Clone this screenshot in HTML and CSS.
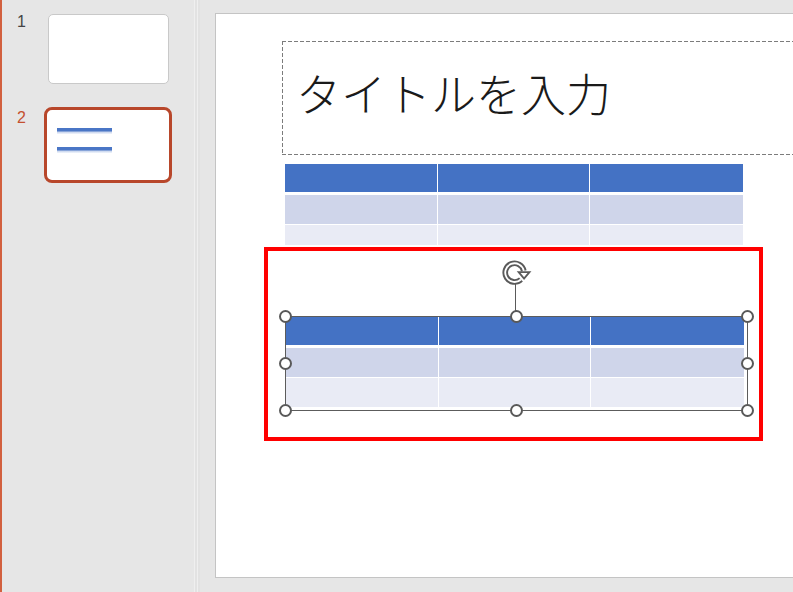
FILE: index.html
```html
<!DOCTYPE html>
<html lang="ja">
<head>
<meta charset="utf-8">
<link rel="stylesheet" href="styles.css">
</head>
<body>
<div class="app">
  <div class="edge"></div>
  <aside class="sidebar">
    <div class="thumb-row">
      <span class="num">1</span>
      <div class="thumb thumb-plain"></div>
    </div>
    <div class="thumb-row active">
      <span class="num">2</span>
      <div class="thumb thumb-active">
        <div class="mini-line"></div>
        <div class="mini-line"></div>
      </div>
    </div>
  </aside>
  <div class="splitter"><span></span><span></span></div>
  <main class="stage">
    <div class="slide">
      <div class="title-box"><span class="title-text">タイトルを入力</span></div>
      <div class="table table-one">
        <div class="cell head"></div><div class="cell head"></div><div class="cell head"></div>
        <div class="cell band1"></div><div class="cell band1"></div><div class="cell band1"></div>
        <div class="cell band2"></div><div class="cell band2"></div><div class="cell band2"></div>
      </div>
      <div class="table table-two">
        <div class="cell head"></div><div class="cell head"></div><div class="cell head"></div>
        <div class="cell band1"></div><div class="cell band1"></div><div class="cell band1"></div>
        <div class="cell band2"></div><div class="cell band2"></div><div class="cell band2"></div>
      </div>
      <div class="selection">
        <span class="handle h-tl"></span>
        <span class="handle h-tc"></span>
        <span class="handle h-tr"></span>
        <span class="handle h-ml"></span>
        <span class="handle h-mr"></span>
        <span class="handle h-bl"></span>
        <span class="handle h-bc"></span>
        <span class="handle h-br"></span>
        <span class="rot-stem"></span>
        <svg class="rot-icon" width="34" height="34" viewBox="0 0 24 24">
          <path d="M16.2 16.6 A6.6 6.6 0 1 1 18.2 10.5" fill="none" stroke="#5a5a5a" stroke-width="4" stroke-linecap="butt"/>
          <path d="M16.2 16.6 A6.6 6.6 0 1 1 18.2 10.5" fill="none" stroke="#ffffff" stroke-width="1.3"/>
          <path d="M14.6 11.4 L22.2 11.4 L18.4 15.9 Z" fill="#ffffff" stroke="#5a5a5a" stroke-width="1.3" stroke-linejoin="miter"/>
        </svg>
      </div>
      <div class="annotation"></div>
    </div>
  </main>
</div>
</body>
</html>
```
FILE: styles.css
```css
* { box-sizing: border-box; }
html, body {
  margin: 0;
  padding: 0;
  width: 793px;
  height: 592px;
  overflow: hidden;
  background: #e6e6e6;
  font-family: "Liberation Sans", Arial, sans-serif;
}
.app {
  display: flex;
  height: 592px;
}
.edge {
  width: 2px;
  flex: none;
  background: #d2603f;
}
.sidebar {
  width: 192px;
  flex: none;
  background: #e6e6e6;
  padding-top: 14px;
  display: flex;
  flex-direction: column;
  gap: 23px;
}
.thumb-row {
  display: flex;
  align-items: flex-start;
}
.num {
  width: 42px;
  padding-left: 15px;
  font-size: 16px;
  line-height: 16px;
  color: #444444;
}
.thumb-plain {
  margin-left: 4px;
  width: 121px;
  height: 70px;
  background: #ffffff;
  border: 1px solid #c9c9c9;
  border-radius: 5px;
}
.thumb-row.active .num {
  color: #c4502f;
  margin-top: 3px;
}
.thumb-active {
  width: 128px;
  height: 76px;
  background: #ffffff;
  border: 3px solid #b8472b;
  border-radius: 8px;
  padding: 18px 0 0 10px;
  display: flex;
  flex-direction: column;
  gap: 13px;
}
.mini-line {
  width: 55px;
  height: 6px;
  background: linear-gradient(#4a76c6 0, #4a76c6 3px, #c6d3ec 4px, #f3f6fc 6px);
}
.splitter {
  width: 6px;
  flex: none;
  display: flex;
  gap: 2px;
  background: #e2e2e2;
}
.splitter span {
  width: 1px;
  background: #efefef;
}
.stage {
  flex: 1;
  padding: 13px 0 0 15px;
  background: #e6e6e6;
}
.slide {
  position: relative;
  width: 620px;
  height: 565px;
  background: #ffffff;
  border: 1px solid #c4c4c4;
  border-right: none;
  padding: 27px 0 0 66px;
}
.title-box {
  width: 560px;
  height: 114px;
  padding: 29px 0 0 14px;
  background-image:
    repeating-linear-gradient(90deg, #7c7c7c 0 4px, transparent 4px 6px),
    repeating-linear-gradient(90deg, #7c7c7c 0 4px, transparent 4px 6px),
    repeating-linear-gradient(180deg, #7c7c7c 0 4px, transparent 4px 6px);
  background-size: 100% 1px, 100% 1px, 1px 100%;
  background-position: 0 0, 0 100%, 0 0;
  background-repeat: no-repeat;
}
.title-text {
  display: block;
  font-family: "Noto Sans CJK JP", "Noto Sans CJK SC", sans-serif;
  font-weight: 300;
  font-size: 45px;
  line-height: 45px;
  color: #1a1a1a;
}
.table {
  display: grid;
  grid-template-columns: 152px 151px 153px;
  column-gap: 1px;
  width: 458px;
}
.table-one {
  margin: 9px 0 0 3px;
  grid-template-rows: 31px 30px 20px;
}
.table-two {
  margin: 72px 0 0 4px;
  width: 457px;
  grid-template-rows: 31px 30px 29px;
}
.cell.head { background: #4472c4; margin-bottom: 3px; }
.cell.band1 { background: #cfd5ea; margin-bottom: 1px; }
.cell.band2 { background: #e9ebf5; }
.selection {
  position: absolute;
  left: 69px;
  top: 302px;
  width: 463px;
  height: 95px;
  border: 1px solid #5c5c5c;
}
.handle {
  position: absolute;
  width: 13px;
  height: 13px;
  border-radius: 50%;
  background: #ffffff;
  border: 2px solid #595959;
}
.h-tl { left: -7.5px; top: -7.5px; }
.h-tc { left: 223.5px; top: -7.5px; }
.h-tr { left: 454.5px; top: -7.5px; }
.h-ml { left: -7.5px; top: 39.5px; }
.h-mr { left: 454.5px; top: 39.5px; }
.h-bl { left: -7.5px; top: 86.5px; }
.h-bc { left: 223.5px; top: 86.5px; }
.h-br { left: 454.5px; top: 86.5px; }
.rot-stem {
  position: absolute;
  left: 229px;
  top: -34px;
  width: 1px;
  height: 28px;
  background: #5a5a5a;
}
.rot-icon {
  position: absolute;
  left: 212px;
  top: -61px;
}
.annotation {
  position: absolute;
  left: 48px;
  top: 233px;
  width: 499px;
  height: 194px;
  border: 4px solid #ff0000;
}
```
